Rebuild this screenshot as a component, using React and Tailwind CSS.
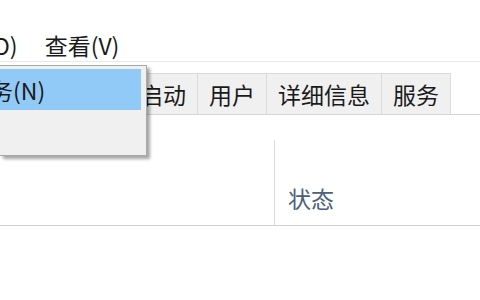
import React from 'react';

const font = { fontFamily: '"Noto Sans CJK SC", "Noto Sans", sans-serif' };

export default function App() {
  const hiddenTabs = ['进程', '性能', '应用历史记录'];
  const tabs = ['启动', '用户', '详细信息', '服务'];

  return (
    <div className="relative w-[480px] h-[300px] overflow-hidden bg-white text-[#1a1a1a]" style={font}>
      {/* menu bar */}
      <div className="flex h-[62px] items-center pt-[28px] border-b border-[#e8e8e8] text-[23px] leading-[30px] whitespace-nowrap">
        <span className="ml-[-61px]">选项(O)</span>
        <span className="ml-[27px]">查看(V)</span>
      </div>

      {/* tabs */}
      <div className="mt-[11px] flex h-[42px] border-b border-[#d4d4d4] text-[23px] leading-[30px] whitespace-nowrap">
        <div className="flex w-[129px] justify-end overflow-hidden">
          {hiddenTabs.map((t) => (
            <div key={t} className="flex flex-none items-center px-[11px] border border-b-0 border-[#dadada] bg-[#f0f0f0]">
              {t}
            </div>
          ))}
        </div>
        {tabs.map((t) => (
          <div key={t} className="flex flex-none items-center px-[11px] border-r border-t border-[#dadada] bg-[#f0f0f0]">
            {t}
          </div>
        ))}
      </div>

      {/* column header */}
      <div className="mt-[25px] flex h-[86px] border-b border-[#cfcfcf]">
        <div className="w-[275px] border-r border-[#dcdcdc]" />
        <div className="flex items-end pb-[12px] pl-[13px] text-[23px] leading-[30px] text-[#4c607a]">状态</div>
      </div>

      {/* dropdown menu */}
      <div className="absolute left-0 top-[65px] w-[147px] h-[91px] bg-[#f0f0f0] border border-l-0 border-[#a8a8a8] shadow-[3px_3px_3px_rgba(0,0,0,0.35)]">
        <div className="mt-[3px] mr-[5px] flex h-[41px] items-center overflow-hidden bg-[#91c9f7] text-[23px] leading-[30px] whitespace-nowrap">
          <span className="ml-[-102px]">新运行任务(N)</span>
        </div>
      </div>
    </div>
  );
}
